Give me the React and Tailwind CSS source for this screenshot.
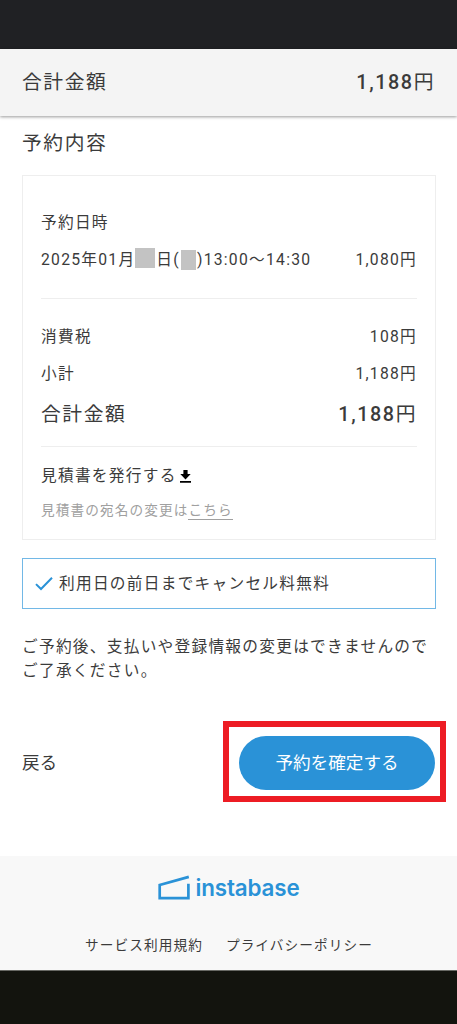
import React from 'react';

const taxRows = [
    { label: '消費税', price: '108' },
    { label: '小計', price: '1,188' },
];

const Logo = () => (
    <div className="flex items-center justify-center h-[27px] text-[#2a92d7]">
        <svg className="w-8 h-[25px]" viewBox="0 0 32 25" fill="none" stroke="currentColor" strokeWidth="2.7">
            <path d="M30.8 1.9 L1.7 10 V23.2 H30.4 V8.8" />
        </svg>
        <span className="ml-[6px] w-[104px] text-[22.4px] leading-[27px] font-semibold tracking-[-0.15px] font-['Inter',sans-serif]">instabase</span>
    </div>
);

const TotalPrice = () => (
    <p><span className="font-medium">1,188</span>円</p>
);

const App = () => {
    return (
        <div className="w-full h-[1024px] flex flex-col bg-white text-[#3b3b3b] text-[15.7px] leading-6 tracking-[1.26px] overflow-hidden font-['Roboto','Noto_Sans_CJK_JP',sans-serif]">
            {/* Status bar */}
            <div className="h-[49px] shrink-0 bg-[#202124]"></div>

            {/* Header */}
            <header className="h-[67px] shrink-0 px-[22px] flex items-center justify-between bg-[#f4f4f4] text-[19.8px] tracking-[1.58px] shadow-[0_1px_3px_rgba(0,0,0,0.4)]">
                <p>合計金額</p>
                <TotalPrice />
            </header>

            <main className="h-[740px] shrink-0 px-[22px]">
                <h1 className="pt-[14px] h-[59px] text-[19.8px] leading-[28px] tracking-[1.58px]">予約内容</h1>

                <section className="h-[365px] w-[414px] border border-[#eeeeee] px-[18px] pt-[35px]">
                    <p>予約日時</p>
                    <div className="mt-[13px] flex justify-between">
                        <div className="flex">
                            <span>2025年01月</span>
                            <span className="w-5 h-5 bg-[#c3c3c3]"></span>
                            <span className="ml-[1px]">日(</span>
                            <span className="w-[15px] h-5 mt-[2px] ml-[1px] bg-[#c3c3c3]"></span>
                            <span className="ml-[1px]">)13:00〜14:30</span>
                        </div>
                        <span>1,080円</span>
                    </div>

                    <hr className="mt-[26px] mb-[26px] border-[#eeeeee]" />

                    {taxRows.map((row) => (
                        <div key={row.label} className="mb-[13px] flex justify-between">
                            <span>{row.label}</span>
                            <span>{row.price}円</span>
                        </div>
                    ))}
                    <div className="flex justify-between pt-px text-[19.8px] leading-[30px] tracking-[1.58px]">
                        <p>合計金額</p>
                        <TotalPrice />
                    </div>

                    <hr className="mt-[16px] mb-[17px] border-[#eeeeee]" />

                    <div className="flex items-center">
                        <span>見積書を発行する</span>
                        <svg className="w-[11px] h-[13px] ml-[3px]" viewBox="0 0 11 13" fill="#000">
                            <path d="M3.4 0h4.2v4h3.1L5.5 9.4.3 4h3.1zM0 11h11v1.8H0z" />
                        </svg>
                    </div>
                    <p className="mt-[10px] text-[13.65px] leading-6 tracking-[1.1px] text-[#a0a0a0]">
                        見積書の宛名の変更は<a className="inline-block leading-[18px] border-b border-[#a0a0a0]">こちら</a>
                    </p>
                </section>

                <div className="mt-[18px] h-[51px] w-[414px] px-3 flex items-center border border-[#72b8e6]">
                    <svg className="w-[18px] h-[15px] mr-[6px]" viewBox="0 0 18 15" fill="none" stroke="#2a92d7" strokeWidth="2">
                        <path d="M1 8.1 L6 13 L17 1.8" />
                    </svg>
                    <span>利用日の前日までキャンセル料無料</span>
                </div>

                <p className="mt-[26px] whitespace-nowrap">
                    ご予約後、支払いや登録情報の変更はできませんので<br />
                    ご了承ください。
                </p>

                <div className="mt-[38px] -mr-[11px] flex items-center justify-between text-[17.6px] tracking-normal">
                    <a className="pt-[2px]">戻る</a>
                    <div className="w-[223px] h-[81px] border-6 border-[#ed1c24] flex items-center justify-center pl-[5px] pt-[2px]">
                        <button className="w-[196px] h-[54px] shrink-0 rounded-full bg-[#2a92d7] text-white">予約を確定する</button>
                    </div>
                </div>
            </main>

            <footer className="h-[115px] shrink-0 pt-[18px] bg-[#f8f8f8] border-b border-[#686964]">
                <Logo />
                <div className="mt-[32px] pl-px flex justify-center gap-[23px] text-[13.65px] tracking-[1.1px]">
                    <a>サービス利用規約</a>
                    <a>プライバシーポリシー</a>
                </div>
            </footer>

            <div className="flex-1 bg-[#13140e]"></div>
        </div>
    );
};

export default App;
